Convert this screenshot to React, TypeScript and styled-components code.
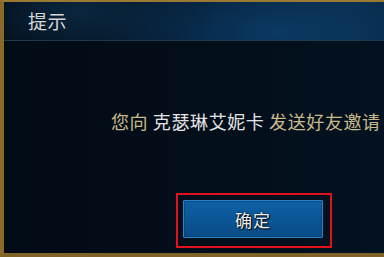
import {FC} from 'react'
import styled, {createGlobalStyle} from 'styled-components'

const GlobalStyle = createGlobalStyle`
  html, body {
    margin: 0;
    padding: 0;
    width: 384px;
    height: 257px;
    overflow: hidden;
    background: #020c17;
  }
  * {
    box-sizing: border-box;
  }
`

const FONT = `"Noto Sans CJK SC", "Noto Sans", sans-serif`

const App: FC = () => (
  <>
    <GlobalStyle />
    <Dialog>
      <Header>
        <Title>提示</Title>
      </Header>
      <Body>
        <Message>
          <Muted>您向 </Muted>
          <Name>克瑟琳艾妮卡</Name>
          <Muted> 发送好友邀请</Muted>
        </Message>
        <Actions>
          <ButtonWrap>
            <ConfirmButton>确定</ConfirmButton>
            <Highlight />
          </ButtonWrap>
        </Actions>
      </Body>
    </Dialog>
  </>
)

const Dialog = styled.div`
  width: 510px;
  height: 257px;
  display: flex;
  flex-direction: column;
  border-left: 4px solid #8a6a28;
  border-top: 2px solid #9a7a32;
  border-bottom: 4px solid #7e6226;
  background: linear-gradient(90deg, #020b15 0%, #03101d 60%, #041527 100%);
  font-family: ${FONT};
`

const Header = styled.div`
  height: 39px;
  flex-shrink: 0;
  display: flex;
  align-items: center;
  padding-left: 24px;
  border-bottom: 1px solid #1e3a4e;
  background:
    radial-gradient(ellipse 120px 50px at 70px 10px, rgba(20, 70, 110, 0.35), transparent),
    radial-gradient(ellipse 160px 60px at 270px 30px, rgba(14, 70, 120, 0.6), transparent),
    linear-gradient(90deg, #030e19 0%, #06213a 45%, #082c4c 70%, #06223c 100%);
`

const Title = styled.h1`
  margin: 0;
  font-size: 19px;
  font-weight: 400;
  color: #d6d6d6;
  letter-spacing: 0.5px;
  line-height: 1;
  padding-bottom: 2px;
`

const Body = styled.div`
  flex: 1;
  display: flex;
  flex-direction: column;
  padding-top: 68px;
`

const Message = styled.p`
  margin: 0;
  padding-left: 107px;
  font-size: 18px;
  line-height: 24px;
  letter-spacing: 0.6px;
  white-space: nowrap;
`

const Muted = styled.span`
  color: #cbb98a;
`

const Name = styled.span`
  color: #e4e4e4;
`

const Actions = styled.div`
  display: flex;
  padding-left: 179px;
  margin-top: 67px;
`

const ButtonWrap = styled.div`
  position: relative;
`

const ConfirmButton = styled.button`
  width: 140px;
  height: 38px;
  border: 1px solid #2a84c8;
  border-radius: 1px;
  background: linear-gradient(180deg, #0e62a6 0%, #0b5596 50%, #0a4b87 100%);
  box-shadow: inset 0 0 0 1px rgba(10, 60, 110, 0.6);
  color: #ececec;
  font-family: ${FONT};
  font-size: 17px;
  text-shadow: 1px 1px 1px #000, 0 0 2px rgba(0, 0, 0, 0.7);
  letter-spacing: 1px;
  padding: 0;
  cursor: pointer;
`

const Highlight = styled.div`
  position: absolute;
  top: -7px;
  left: -7px;
  right: -9px;
  bottom: -10px;
  border: 2px solid #e3111c;
  pointer-events: none;
`

export default App
